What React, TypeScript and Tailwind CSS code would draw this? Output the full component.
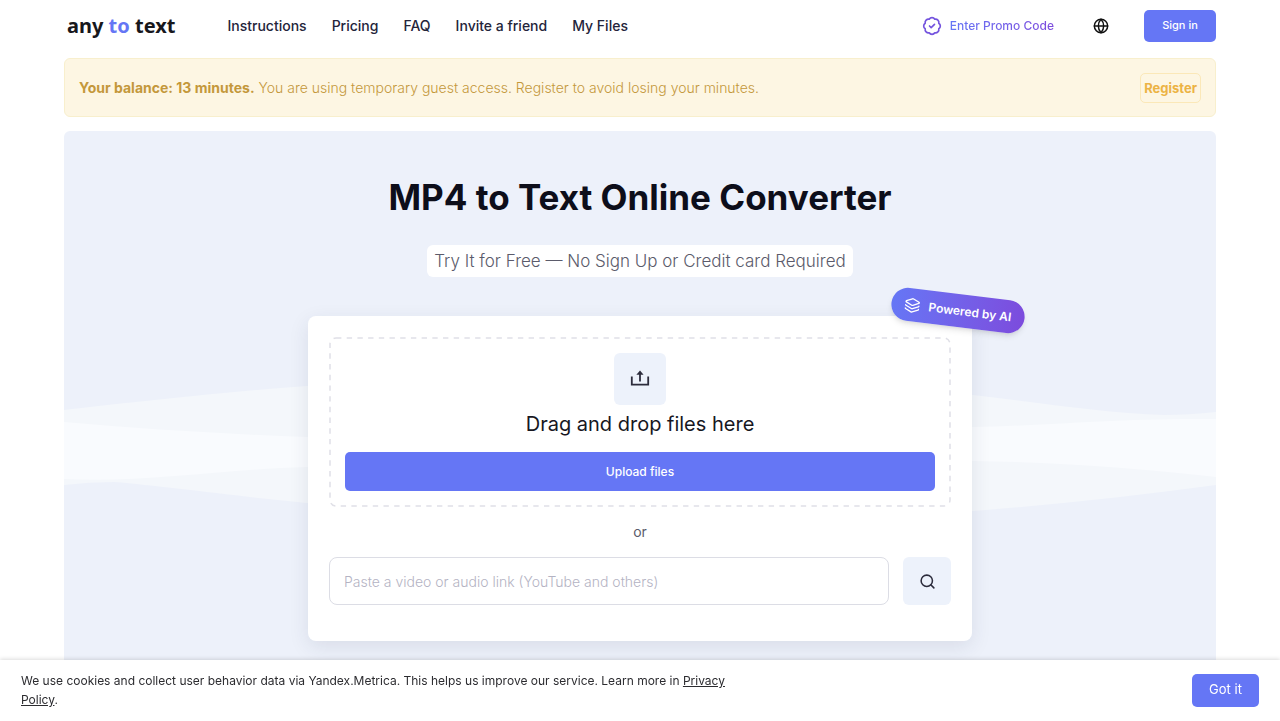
import { BadgeCheck, Globe, Layers, Search } from "lucide-react";

const navLinks = [
  { label: "Instructions", href: "/instructions" },
  { label: "Pricing", href: "/pricing" },
  { label: "FAQ", href: "/faq" },
  { label: "Invite a friend", href: "/invite" },
  { label: "My Files", href: "/files" },
];

function Header() {
  return (
    <header className="flex h-[51px] items-center justify-between">
      <div className="flex items-center gap-[52px]">
        <a
          href="/"
          className="pl-[3px] font-['Noto_Sans',sans-serif] text-xl font-bold text-[#17171c]"
        >
          any <span className="text-[#6576f5]">to</span> text
        </a>
        <nav className="flex items-center gap-[25px] text-sm font-medium text-[#24243a]">
          {navLinks.map((link) => (
            <a key={link.href} href={link.href}>
              {link.label}
            </a>
          ))}
        </nav>
      </div>
      <div className="flex items-center">
        <button type="button" className="flex items-center gap-2 text-xs font-medium">
          <BadgeCheck className="size-5 text-[#7454de]" strokeWidth={2} />
          <span className="bg-linear-to-r from-[#6576f5] to-[#7c4bdd] bg-clip-text text-transparent">
            Enter Promo Code
          </span>
        </button>
        <button type="button" aria-label="Language" className="mr-[31px] ml-[35px] p-1 text-[#111]">
          <Globe className="size-4" strokeWidth={2.2} />
        </button>
        <button
          type="button"
          className="h-8 w-[72px] rounded-[5px] bg-[#6576f5] text-[11px] font-medium text-white"
        >
          Sign in
        </button>
      </div>
    </header>
  );
}

function BalanceAlert() {
  return (
    <div className="mt-[7px] flex h-[59px] items-center justify-between rounded-md border border-[#f8efcd] bg-[#fdf6e3] px-[14px] text-[#c4983b]">
      <p className="text-sm">
        <strong className="font-bold">Your balance: 13 minutes.</strong>{" "}
        <span className="font-light">
          You are using temporary guest access. Register to avoid losing your minutes.
        </span>
      </p>
      <a
        href="/register"
        className="rounded-[5px] border border-[#fbe8b8] px-[3px] py-1 text-[13px] leading-5 font-bold text-[#ecb344]"
      >
        Register
      </a>
    </div>
  );
}

function Waves() {
  return (
    <svg
      viewBox="0 0 1152 140"
      preserveAspectRatio="none"
      aria-hidden="true"
      className="absolute top-[244px] left-0 h-[140px] w-full"
    >
      <path
        d="M0 35 C80 26 160 17 243 11 C460 -4 700 -2 909 20 C980 28 1040 38 1100 40 Q1125 40 1152 37 V110 C1070 121 990 130 909 136 C690 150 450 146 243 128 C170 121 100 111 50 107 Q25 107 0 110 Z"
        fill="#f4f7fb"
      />
      <path
        d="M0 47 C80 54 160 59 243 62 C460 68 700 60 909 52 C980 51 1050 43 1152 44 V102 C1070 93 990 87 909 86 C690 82 450 82 243 92 C160 94 80 108 0 104 Z"
        fill="#f9fbfe"
      />
    </svg>
  );
}

function UploadIcon() {
  return (
    <svg
      viewBox="0 0 20 20"
      className="size-5"
      fill="none"
      stroke="currentColor"
      strokeWidth="1.8"
      aria-hidden="true"
    >
      <path d="M1.8 7.4v8.2h16.4V7.4" />
      <path d="M10 12.6V4" />
      <path d="M10 1.4 13.6 5.8H6.4Z" fill="currentColor" stroke="none" />
    </svg>
  );
}

function DropZone() {
  return (
    <div className="relative flex flex-col items-center p-4">
      <svg className="absolute inset-0 size-full" aria-hidden="true">
        <rect
          x="1"
          y="1"
          rx="6"
          fill="none"
          stroke="#e0e0e7"
          strokeWidth="1.5"
          strokeDasharray="5.4 5.3"
          className="h-[calc(100%-2px)] w-[calc(100%-2px)]"
        />
      </svg>
      <div className="flex size-[52px] items-center justify-center rounded-md bg-[#edf2fb] text-[#2c2c3c]">
        <UploadIcon />
      </div>
      <p className="mt-[3px] text-xl leading-8 text-[#17171f]">Drag and drop files here</p>
      <button
        type="button"
        className="relative mt-3 h-[39px] w-full rounded-[5px] bg-[#6576f5] text-xs font-medium text-white"
      >
        Upload files
      </button>
    </div>
  );
}

function UploadCard() {
  return (
    <div className="relative mx-auto mt-[39px] w-full max-w-[664px] rounded-lg bg-white px-[21px] pt-[21px] pb-9 shadow-[0_6px_20px_rgba(40,45,80,0.1)]">
      <DropZone />
      <p className="my-[13px] text-center text-sm leading-6 text-[#5b5b6b]">or</p>
      <form className="flex gap-[14px]">
        <input
          type="url"
          aria-label="Video or audio link"
          placeholder="Paste a video or audio link (YouTube and others)"
          className="h-12 min-w-0 flex-1 rounded-lg border border-[#dcdde5] px-[14px] text-sm font-light outline-none placeholder:text-[#b4b3c3]"
        />
        <button
          type="button"
          aria-label="Search"
          className="flex size-12 items-center justify-center rounded-md bg-[#edf2fb] text-[#2c2c3c]"
        >
          <Search className="size-[17px]" strokeWidth={2.2} />
        </button>
      </form>
      <div className="absolute -top-[22px] -right-[53px] flex h-[33px] w-[134px] rotate-[7deg] items-center justify-center gap-2 rounded-full bg-linear-to-r from-[#6576f5] to-[#7c4bdd] text-xs font-semibold text-white shadow-md">
        <Layers className="size-4" strokeWidth={2} />
        Powered by AI
      </div>
    </div>
  );
}

function CookieBar() {
  return (
    <div className="fixed inset-x-0 bottom-0 flex items-center justify-between bg-white px-[21px] pt-[11px] pb-3 shadow-[0_-1px_4px_rgba(0,0,0,0.14)]">
      <p className="max-w-[715px] text-xs leading-[19px] text-[#2c2c30]">
        We use cookies and collect user behavior data via Yandex.Metrica. This helps us
        improve our service. Learn more in{" "}
        <a href="/privacy" className="underline">
          Privacy Policy
        </a>
        .
      </p>
      <button
        type="button"
        className="h-[33px] w-[67px] rounded-[5px] bg-[#6576f5] text-[13px] text-white"
      >
        Got it
      </button>
    </div>
  );
}

export default function App() {
  return (
    <div className="flex min-h-screen flex-col bg-white px-16 font-['Inter',sans-serif]">
      <Header />
      <BalanceAlert />
      <main className="relative mt-[14px] flex-1 rounded-t-md bg-[#edf1fa] px-6 pt-11 pb-20">
        <Waves />
        <h1 className="relative text-center text-[35px] leading-[44px] font-bold text-[#0d0e1a]">
          MP4 to Text Online Converter
        </h1>
        <p className="relative mx-auto mt-[26px] w-fit rounded-md bg-white px-[7px] text-[17px] leading-8 font-light text-[#5b5b6b]">
          Try It for Free — No Sign Up or Credit card Required
        </p>
        <UploadCard />
      </main>
      <CookieBar />
    </div>
  );
}
